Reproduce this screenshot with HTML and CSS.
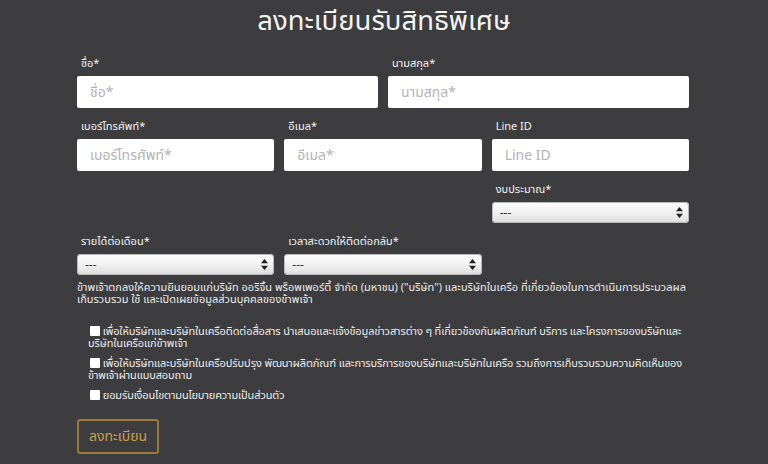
FILE: index.html
```html
<!doctype html>
<html lang="th">
  <head>
    <meta charset="UTF-8" />
    <meta name="viewport" content="width=device-width, initial-scale=1.0" />
    <title>ลงทะเบียนรับสิทธิพิเศษ</title>
    <link rel="stylesheet" href="styles.css">
  </head>

  <body>
    <h1>ลงทะเบียนรับสิทธิพิเศษ</h1>
    <form id="register-form" class="register">
      <div class="row two">
        <div class="group">
          <label for="firstname">ชื่อ*</label>
          <input type="text" id="firstname" name="firstname" placeholder="ชื่อ*" />
        </div>
        <div class="group">
          <label for="lastname">นามสกุล*</label>
          <input type="text" id="lastname" name="lastname" placeholder="นามสกุล*" />
        </div>
      </div>

      <div class="row three">
        <div class="group">
          <label for="phone">เบอร์โทรศัพท์*</label>
          <input type="text" id="phone" name="phone" placeholder="เบอร์โทรศัพท์*" />
        </div>
        <div class="group">
          <label for="email">อีเมล*</label>
          <input type="text" id="email" name="email" placeholder="อีเมล*" />
        </div>
        <div class="group">
          <label for="line">Line ID</label>
          <input type="text" id="line" name="line" placeholder="Line ID" />
        </div>
      </div>

      <div class="row three">
        <div class="group"></div>
        <div class="group"></div>
        <div class="group">
          <label for="budget">งบประมาณ*</label>
          <div class="select-wrap">
            <select id="budget" name="budget"><option>---</option></select>
            <svg class="arrows" width="7" height="11" viewBox="0 0 7 11"><path d="M3.5 0L7 4.2H0z M3.5 11L0 6.8H7z" fill="#222"/></svg>
          </div>
        </div>
      </div>

      <div class="row three">
        <div class="group">
          <label for="income">รายได้ต่อเดือน*</label>
          <div class="select-wrap">
            <select id="income" name="income"><option>---</option></select>
            <svg class="arrows" width="7" height="11" viewBox="0 0 7 11"><path d="M3.5 0L7 4.2H0z M3.5 11L0 6.8H7z" fill="#222"/></svg>
          </div>
        </div>
        <div class="group">
          <label for="contact-time">เวลาสะดวกให้ติดต่อกลับ*</label>
          <div class="select-wrap">
            <select id="contact-time" name="contact_time"><option>---</option></select>
            <svg class="arrows" width="7" height="11" viewBox="0 0 7 11"><path d="M3.5 0L7 4.2H0z M3.5 11L0 6.8H7z" fill="#222"/></svg>
          </div>
        </div>
        <div class="group"></div>
      </div>

      <p class="consent">ข้าพเจ้าตกลงให้ความยินยอมแก่บริษัท ออริจิ้น พร็อพเพอร์ตี้ จำกัด (มหาชน) ("บริษัท") และบริษัทในเครือ ที่เกี่ยวข้องในการดำเนินการประมวลผล เก็บรวบรวม ใช้ และเปิดเผยข้อมูลส่วนบุคคลของข้าพเจ้า</p>

      <div class="checks">
        <p><input type="checkbox" name="c1" /> เพื่อให้บริษัทและบริษัทในเครือติดต่อสื่อสาร นำเสนอและแจ้งข้อมูลข่าวสารต่าง ๆ ที่เกี่ยวข้องกับผลิตภัณฑ์ บริการ และโครงการของบริษัทและบริษัทในเครือแก่ข้าพเจ้า</p>
        <p><input type="checkbox" name="c2" /> เพื่อให้บริษัทและบริษัทในเครือปรับปรุง พัฒนาผลิตภัณฑ์ และการบริการของบริษัทและบริษัทในเครือ รวมถึงการเก็บรวบรวมความคิดเห็นของข้าพเจ้าผ่านแบบสอบถาม</p>
        <p><input type="checkbox" name="c3" /> ยอมรับเงื่อนไขตามนโยบายความเป็นส่วนตัว</p>
      </div>

      <button type="submit">ลงทะเบียน</button>
    </form>
  </body>
</html>
```

FILE: styles.css
```css
body {
  margin: 0;
  background-color: #3d3d3f;
  font-family: "Noto Sans Thai", "Noto Sans", "DejaVu Sans", sans-serif;
  color: #f0f0f0;
}

h1 {
  margin: 0;
  padding-top: 4px;
  height: 42px;
  line-height: 36px;
  text-align: center;
  font-size: 27.5px;
  font-weight: normal;
  color: #f4f4f4;
}

.register {
  width: 612px;
  margin: 0 0 0 77px;
  padding-top: 11px;
}

.row {
  display: grid;
  gap: 10px;
  margin-bottom: 12px;
}

.row.two {
  grid-template-columns: 1fr 1fr;
}

.row.three {
  grid-template-columns: 1fr 1fr 1fr;
}

label {
  display: block;
  margin: 0 0 5px 4px;
  font-size: 11px;
  line-height: 14px;
  color: #f2f2f2;
}

input[type="text"] {
  display: block;
  box-sizing: border-box;
  width: 100%;
  height: 32px;
  padding: 0 13px;
  border: none;
  border-radius: 2px;
  background: #fff;
  font-family: inherit;
  font-size: 14px;
  color: #333;
}

input::placeholder {
  color: #b3b3b3;
}

.select-wrap {
  position: relative;
}

select {
  display: block;
  width: 100%;
  height: 21px;
  padding: 0 8px;
  border: none;
  border-radius: 4px;
  appearance: none;
  background: linear-gradient(#ffffff, #ededed 60%, #dcdcdc);
  box-shadow: inset 0 0 0 1px #b9b9b9;
  font-family: inherit;
  font-size: 12px;
  color: #333;
}

.arrows {
  position: absolute;
  right: 6px;
  top: 5px;
  pointer-events: none;
}

.consent {
  margin: -5px 0 0;
  font-size: 11px;
  line-height: 12px;
  color: #ececec;
}

.checks {
  margin-top: 20px;
  padding-left: 11px;
}

.checks p {
  margin: 0 0 8px;
  font-size: 11px;
  line-height: 12px;
  letter-spacing: -0.12px;
  color: #ececec;
}

input[type="checkbox"] {
  appearance: none;
  width: 10px;
  height: 10px;
  margin: 0 0 0 2px;
  vertical-align: -1px;
  border-radius: 1px;
  background: #fff;
}

button {
  margin-top: 9px;
  width: 82px;
  height: 35px;
  padding: 0;
  background: transparent;
  border: 2px solid #9b7b3d;
  border-radius: 3px;
  font-family: inherit;
  font-size: 14px;
  color: #c9a04c;
  cursor: pointer;
}
```
